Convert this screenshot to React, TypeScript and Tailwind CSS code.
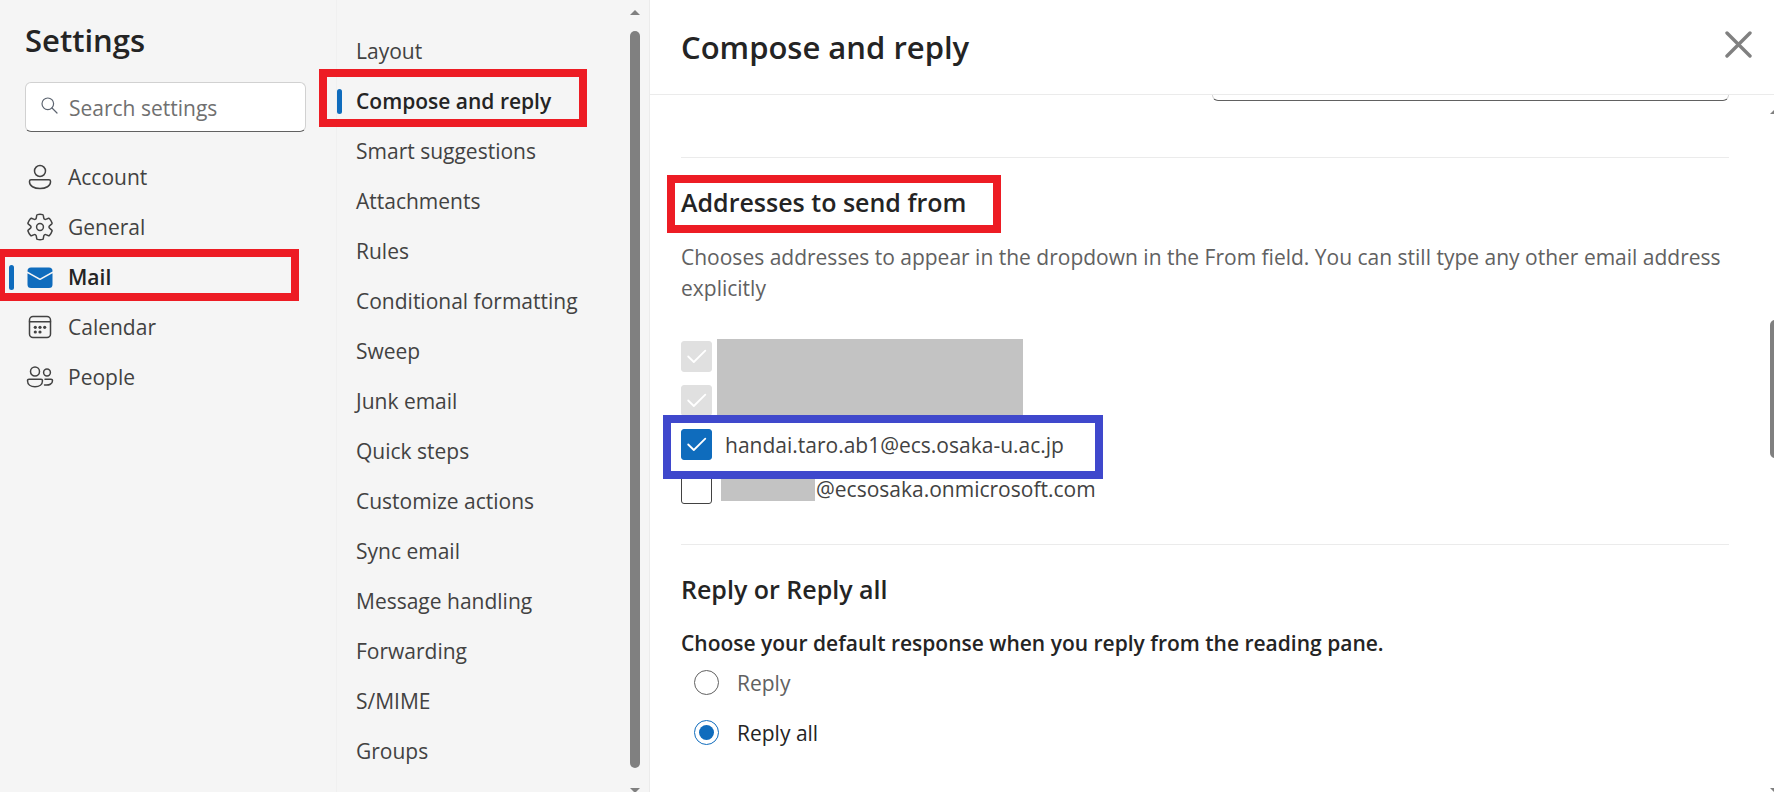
import { useState } from "react";
import type { ReactNode } from "react";
import clsx from "clsx";

const stroke = {
  fill: "none",
  stroke: "currentColor",
  strokeWidth: 1.5,
  strokeLinecap: "round" as const,
  strokeLinejoin: "round" as const,
};

const AccountIcon = () => (
  <svg width="28" height="28" viewBox="0 0 28 28" {...stroke}>
    <circle cx="14" cy="8" r="5.5" />
    <path d="M5 16.7h18a1.5 1.5 0 0 1 1.5 1.5v.7c0 4-4.5 6.7-10.5 6.7S3.5 22.9 3.5 18.9v-.7A1.5 1.5 0 0 1 5 16.7Z" />
  </svg>
);

const GearIcon = () => (
  <svg width="28" height="28" viewBox="0.6 0.6 18.8 18.8" {...stroke} strokeWidth={1}>
    <path d="M1.91 7.38A8.5 8.5 0 0 1 3.7 4.3a.5.5 0 0 1 .54-.13l1.92.68a1 1 0 0 0 1.32-.76l.36-2a.5.5 0 0 1 .4-.4 8.53 8.53 0 0 1 3.55 0c.2.04.35.2.38.4l.37 2a1 1 0 0 0 1.32.76l1.92-.68a.5.5 0 0 1 .54.13 8.5 8.5 0 0 1 1.78 3.08c.06.2 0 .4-.15.54l-1.56 1.32a1 1 0 0 0 0 1.52l1.56 1.32a.5.5 0 0 1 .15.54 8.5 8.5 0 0 1-1.78 3.08.5.5 0 0 1-.54.13l-1.92-.68a1 1 0 0 0-1.32.76l-.37 2a.5.5 0 0 1-.38.4 8.53 8.53 0 0 1-3.56 0 .5.5 0 0 1-.39-.4l-.36-2a1 1 0 0 0-1.32-.76l-1.92.68a.5.5 0 0 1-.54-.13 8.5 8.5 0 0 1-1.78-3.08.5.5 0 0 1 .15-.54l1.56-1.32a1 1 0 0 0 0-1.52L2.06 7.92a.5.5 0 0 1-.15-.54Z" />
    <circle cx="10" cy="10" r="2.3" />
  </svg>
);

const MailIcon = () => (
  <svg width="28" height="28" viewBox="0 0 28 28" fill="#0f6cbd">
    <path d="M1.5 10.2 13.6 17a.8.8 0 0 0 .8 0l12.1-6.8v11.3A3.500 3.500 0 0 1 23 25H5a3.500 3.500 0 0 1-3.500-3.500Z" />
    <path d="M5 4.500h18A3.500 3.500 0 0 1 26.500 8v.6L14 15.500 1.500 8.600V8A3.500 3.500 0 0 1 5 4.500Z" />
  </svg>
);

const CalendarIcon = () => (
  <svg width="28" height="28" viewBox="0 0 28 28" {...stroke}>
    <rect x="3.5" y="3.5" width="21" height="21" rx="3.5" />
    <path d="M3.5 8.8h21" />
    <g fill="currentColor" stroke="none">
      <circle cx="9.3" cy="14.3" r="1.6" />
      <circle cx="14" cy="14.3" r="1.6" />
      <circle cx="18.7" cy="14.3" r="1.6" />
      <circle cx="9.3" cy="19" r="1.6" />
      <circle cx="14" cy="19" r="1.6" />
    </g>
  </svg>
);

const PeopleIcon = () => (
  <svg width="28" height="28" viewBox="0 0 28 28" {...stroke}>
    <circle cx="9" cy="8.5" r="4.5" />
    <circle cx="21" cy="9.5" r="3.4" />
    <path d="M3 16.2h12a1.5 1.5 0 0 1 1.5 1.5c0 3.7-3.3 6-7.5 6s-7.5-2.3-7.5-6A1.5 1.5 0 0 1 3 16.2Z" />
    <path d="M19 16.2h6a1.5 1.5 0 0 1 1.5 1.5c0 3.1-3.2 5-8 4.2" />
  </svg>
);

const mainItems: { label: string; icon: ReactNode }[] = [
  { label: "Account", icon: <AccountIcon /> },
  { label: "General", icon: <GearIcon /> },
  { label: "Mail", icon: <MailIcon /> },
  { label: "Calendar", icon: <CalendarIcon /> },
  { label: "People", icon: <PeopleIcon /> },
];

const mailItems = [
  "Layout",
  "Compose and reply",
  "Smart suggestions",
  "Attachments",
  "Rules",
  "Conditional formatting",
  "Sweep",
  "Junk email",
  "Quick steps",
  "Customize actions",
  "Sync email",
  "Message handling",
  "Forwarding",
  "S/MIME",
  "Groups",
];

const Marker = () => <span className="h-[25px] w-[5px] rounded-full bg-[#0f6cbd]" />;

interface CheckboxProps {
  defaultChecked?: boolean;
  disabled?: boolean;
  label?: string;
}

const Checkbox = ({ defaultChecked, disabled, label }: CheckboxProps) => (
  <span className="relative flex size-[31px] shrink-0">
    <input
      type="checkbox"
      defaultChecked={defaultChecked}
      disabled={disabled}
      aria-label={label}
      className="peer size-full appearance-none rounded-[3px] border border-[#424242] bg-white checked:border-[#0f6cbd] checked:bg-[#0f6cbd] disabled:border-[#e0e0e0] disabled:bg-[#e0e0e0]"
    />
    <svg
      className="pointer-events-none absolute inset-0 hidden peer-checked:block"
      viewBox="0 0 31 31"
      fill="none"
      stroke="white"
      strokeWidth="1.8"
      strokeLinecap="round"
      strokeLinejoin="round"
    >
      <path d="M7.2 15.5 12.8 21 24.3 9.7" />
    </svg>
  </span>
);

const App = () => {
  const [response, setResponse] = useState("Reply all");

  return (
    <div className="flex h-screen overflow-hidden bg-white font-['Open_Sans',sans-serif] text-[21px] text-[#424242]">
      <aside className="flex w-[337px] shrink-0 flex-col border-r border-[#f0f0f0] bg-[#f5f5f5] pt-5">
        <h1 className="px-[25px] text-[31px] leading-10 font-semibold text-[#242424]">
          Settings
        </h1>
        <label className="mt-[22px] mr-[30px] ml-[25px] flex h-[50px] items-center gap-[11px] rounded-md border border-[#d1d1d1] border-b-[#616161] bg-white px-[15px]">
          <svg width="17" height="17" viewBox="0 0 17 17" className="mb-1 shrink-0 text-[#5c6470]" {...stroke} strokeWidth={1.2}>
            <circle cx="6.8" cy="6.8" r="5.8" />
            <path d="m11 11 5 5" />
          </svg>
          <input
            type="text"
            aria-label="Search settings"
            placeholder="Search settings"
            className="w-full min-w-0 pt-1 outline-none placeholder:text-[#707070]"
          />
        </label>
        <nav className="mt-5">
          {mainItems.map(({ label, icon }) => (
            <a
              key={label}
              href="#"
              className={clsx(
                "relative flex h-[50px] items-center pl-[9px]",
                label === "Mail" && "font-semibold text-[#242424]"
              )}
            >
              <span className="flex w-[17px]">{label === "Mail" && <Marker />}</span>
              {icon}
              <span className="ml-[14px] pt-[2px]">{label}</span>
              {label === "Mail" && (
                <span className="absolute -top-[3px] right-[37px] bottom-px -left-[3px] border-8 border-[#ed1c24]" />
              )}
            </a>
          ))}
        </nav>
      </aside>

      <div className="flex w-[313px] shrink-0 border-r border-[#ebebeb] bg-[#f5f5f5]">
        <nav className="flex-1 pt-[26px]">
          {mailItems.map((label) => (
            <a
              key={label}
              href="#"
              className={clsx(
                "relative flex h-[50px] items-center whitespace-nowrap",
                label === "Compose and reply" && "font-semibold text-[#242424]"
              )}
            >
              <span className="flex w-[19px]">{label === "Compose and reply" && <Marker />}</span>
              <span className="pt-[2px]">{label}</span>
              {label === "Compose and reply" && (
                <span className="absolute -top-[7px] right-[43px] -bottom-px -left-[18px] border-8 border-[#ed1c24]" />
              )}
            </a>
          ))}
        </nav>
        <div className="mr-[9px] flex w-[10px] flex-col items-center pt-[10px] text-[#808080]">
          <svg width="10" height="5" viewBox="0 0 10 5" fill="currentColor" className="shrink-0">
            <path d="M0 5 5 0l5 5Z" />
          </svg>
          <div className="mt-4 w-full flex-1 rounded-full bg-[#808080]" />
          <svg width="10" height="5" viewBox="0 0 10 5" fill="currentColor" className="mt-5 -mb-px shrink-0">
            <path d="M0 0h10L5 5Z" />
          </svg>
        </div>
      </div>

      <main className="flex min-w-0 flex-1 flex-col">
        <header className="flex h-[95px] shrink-0 items-center justify-between border-b border-[#ebebeb] pr-[22px] pl-[31px]">
          <h2 className="text-[31px] leading-10 font-semibold text-[#242424]">
            Compose and reply
          </h2>
          <button aria-label="Close" className="mb-[6px] text-[#808080]">
            <svg width="27" height="27" viewBox="0 0 27 27" {...stroke} strokeWidth={3.4}>
              <path d="m2 2 23 23M25 2 2 25" />
            </svg>
          </button>
        </header>

        <div className="flex min-h-0 flex-1">
          <div className="min-w-0 flex-1 pr-[41px] pl-[31px]">
            <div className="ml-auto h-[6px] w-[517px] rounded-b-md border-x border-b border-x-[#d1d1d1] border-b-[#616161]" />

            <section className="mt-14 border-t border-[#ebebeb] pt-7">
              <h3 className="relative w-fit text-[25px] leading-8 font-semibold text-[#242424]">
                Addresses to send from
                <span className="absolute -top-[11px] -right-[35px] -bottom-[15px] -left-[14px] border-8 border-[#ed1c24]" />
              </h3>
              <p className="mt-6 leading-[31px] text-[#616161]">
                Chooses addresses to appear in the dropdown in the From field. You can
                still type any other email address explicitly
              </p>
              <div className="relative mt-[30px] w-fit">
                <div className="flex h-11 items-center">
                  <Checkbox defaultChecked disabled label="Primary address" />
                </div>
                <div className="flex h-11 items-center">
                  <Checkbox defaultChecked disabled label="Secondary address" />
                </div>
                <span className="absolute top-[5px] left-9 h-[77px] w-[306px] bg-[#c3c3c3]" />
                <label className="relative z-10 flex h-11 items-center gap-[13px]">
                  <Checkbox defaultChecked />
                  <span className="pt-1">handai.taro.ab1@ecs.osaka-u.ac.jp</span>
                  <span className="absolute -top-[7px] -bottom-[13px] -left-[18px] w-[440px] border-8 border-[#3f48cc]" />
                </label>
                <label className="flex h-11 items-center">
                  <Checkbox />
                  <span className="mt-1 mr-px ml-[9px] h-[22px] w-[94px] bg-[#c3c3c3]" />
                  <span className="pt-1">@ecsosaka.onmicrosoft.com</span>
                </label>
              </div>
            </section>

            <section className="mt-[34px] border-t border-[#ebebeb] pt-7">
              <h3 className="text-[25px] leading-8 font-semibold text-[#242424]">
                Reply or Reply all
              </h3>
              <fieldset>
                <legend className="pt-6 leading-7 font-semibold text-[#242424]">
                  Choose your default response when you reply from the reading pane.
                </legend>
                {["Reply", "Reply all"].map((option) => (
                  <label key={option} className="flex h-[50px] items-center pl-[13px]">
                    <input
                      type="radio"
                      name="response"
                      checked={response === option}
                      onChange={() => setResponse(option)}
                      className="peer size-[25px] appearance-none rounded-full border border-[#616161] bg-white bg-clip-content p-1 checked:border-[#0f6cbd] checked:bg-[#0f6cbd]"
                    />
                    <span className="ml-[18px] pt-1 text-[#616161] peer-checked:text-[#242424]">
                      {option}
                    </span>
                  </label>
                ))}
              </fieldset>
            </section>
          </div>

          {/* scrollbar, cut off by the window edge */}
          <div className="flex w-1 shrink-0 flex-col overflow-hidden pt-[14px] text-[#808080]">
            <svg width="10" height="5" viewBox="0 0 10 5" fill="currentColor" className="shrink-0">
              <path d="M0 5 5 0l5 5Z" />
            </svg>
            <div className="mt-[206px] h-[138px] w-[10px] shrink-0 rounded-full bg-[#808080]" />
            <svg width="10" height="5" viewBox="0 0 10 5" fill="currentColor" className="mt-auto -mb-px shrink-0">
              <path d="M0 0h10L5 5Z" />
            </svg>
          </div>
        </div>
      </main>
    </div>
  );
};

export default App;
